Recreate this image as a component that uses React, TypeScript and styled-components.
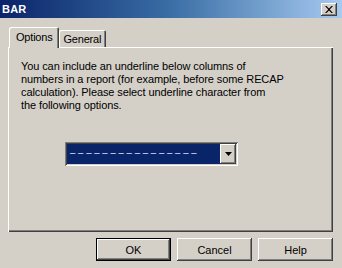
import React from "react";
import styled, { createGlobalStyle } from "styled-components";

const Global = createGlobalStyle`
  html, body { margin: 0; padding: 0; background: #d4d0c8; }
  body { font-family: "Liberation Sans", Arial, sans-serif; font-size: 11px; color: #000; }
`;

const Window = styled.div`
  width: 342px;
  height: 268px;
  background: #d4d0c8;
  display: flex;
  flex-direction: column;
  overflow: hidden;
`;

const TitleBar = styled.div`
  height: 18px;
  display: flex;
  align-items: flex-start;
  justify-content: space-between;
  background: linear-gradient(to right, #0a246a 0%, #3a6ea5 50%, #a6caf0 100%);
  padding: 0 5px 0 2px;
`;

const Title = styled.span`
  color: #fff;
  font-weight: bold;
  font-size: 11px;
  line-height: 18px;
  letter-spacing: 0.2px;
`;

const CloseButton = styled.div`
  width: 16px;
  height: 13px;
  margin-top: 3px;
  background: #d4d0c8;
  box-shadow: inset -1px -1px #404040, inset 1px 1px #fff, inset -2px -2px #808080;
  display: flex;
  align-items: center;
  justify-content: center;
`;

const Content = styled.div`
  padding: 9px 9px 0 8px;
  display: flex;
  flex-direction: column;
`;

const TabStrip = styled.div`
  height: 20px;
  display: flex;
  align-items: flex-end;
  padding-left: 1px;
`;

const Tab = styled.div<{ $active?: boolean }>`
  position: relative;
  z-index: ${(p) => (p.$active ? 2 : 1)};
  height: ${(p) => (p.$active ? 21 : 17)}px;
  margin-bottom: ${(p) => (p.$active ? -1 : 0)}px;
  padding: ${(p) => (p.$active ? "4px 6px 0 7px" : "3px 5px 0 5px")};
  background: #d4d0c8;
  border-top-left-radius: 2px;
  border-top-right-radius: 2px;
  box-shadow: inset 1px 1px #fff, inset -1px 0 #404040, inset -2px 0 #808080;
  box-sizing: border-box;
  font-size: 11px;
  line-height: 13px;
  letter-spacing: -0.2px;
  white-space: nowrap;
`;

const Panel = styled.div`
  width: 325px;
  height: 185px;
  box-sizing: border-box;
  box-shadow: inset 1px 1px #fff, inset -1px -1px #404040, inset -2px -2px #808080;
  padding: 13px 12px 0 13px;
  display: flex;
  flex-direction: column;
`;

const Message = styled.p`
  margin: 0;
  font-size: 11px;
  line-height: 13px;
  letter-spacing: -0.1px;
  white-space: nowrap;
`;

const Combo = styled.div`
  margin: 30px 0 0 44px;
  width: 173px;
  height: 24px;
  box-sizing: border-box;
  background: #d4d0c8;
  box-shadow: inset 1px 1px #808080, inset -1px -1px #fff, inset 2px 2px #404040, inset -2px -2px #d4d0c8;
  padding: 2px;
  display: flex;
`;

const ComboValue = styled.div`
  flex: 1;
  background: #0a246a;
  color: #fff;
  font-family: "Liberation Sans", Arial, sans-serif;
  font-size: 9.5px;
  line-height: 18px;
  letter-spacing: 2.8px;
  padding-left: 3px;
  overflow: hidden;
  white-space: nowrap;
`;

const ComboButton = styled.div`
  width: 16px;
  background: #d4d0c8;
  box-shadow: inset -1px -1px #404040, inset 1px 1px #fff, inset -2px -2px #808080;
  display: flex;
  align-items: center;
  justify-content: center;
`;

const ButtonRow = styled.div`
  margin-top: 6px;
  width: 325px;
  display: flex;
  justify-content: flex-end;
  gap: 6px;
`;

const Button = styled.div<{ $default?: boolean }>`
  width: 75px;
  height: 23px;
  box-sizing: border-box;
  background: #d4d0c8;
  display: flex;
  align-items: center;
  justify-content: center;
  font-size: 11px;
  box-shadow: ${(p) =>
    p.$default
      ? "inset 0 0 0 1px #000, inset -2px -2px #404040, inset 2px 2px #fff, inset -3px -3px #808080"
      : "inset -1px -1px #404040, inset 1px 1px #fff, inset -2px -2px #808080"};
`;

export default function App() {
  return (
    <>
      <Global />
      <Window>
        <TitleBar>
          <Title>BAR</Title>
          <CloseButton>
            <svg width="8" height="7" viewBox="0 0 8 7">
              <path d="M0 0 L1.5 0 L4 2.5 L6.5 0 L8 0 L4.75 3.5 L8 7 L6.5 7 L4 4.5 L1.5 7 L0 7 L3.25 3.5 Z" fill="#000" />
            </svg>
          </CloseButton>
        </TitleBar>
        <Content>
          <TabStrip>
            <Tab $active>Options</Tab>
            <Tab>General</Tab>
          </TabStrip>
          <Panel>
            <Message>
              You can include an underline below columns of
              <br />
              numbers in a report (for example, before some RECAP
              <br />
              calculation). Please select underline character from
              <br />
              the following options.
            </Message>
            <Combo>
              <ComboValue>––––––––––––––––</ComboValue>
              <ComboButton>
                <svg width="7" height="4" viewBox="0 0 7 4">
                  <path d="M0 0 H7 L3.5 4 Z" fill="#000" />
                </svg>
              </ComboButton>
            </Combo>
          </Panel>
          <ButtonRow>
            <Button $default>OK</Button>
            <Button>Cancel</Button>
            <Button>Help</Button>
          </ButtonRow>
        </Content>
      </Window>
    </>
  );
}
